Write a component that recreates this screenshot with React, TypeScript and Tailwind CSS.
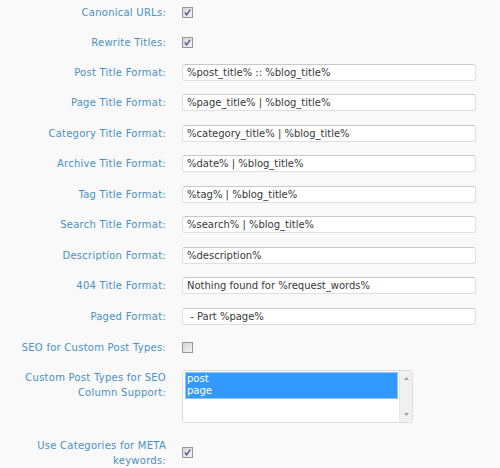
import React from "react";

const FONT = { fontFamily: '"DejaVu Sans", Verdana, sans-serif' };

function Check({ checked }: { checked: boolean }) {
  return (
    <svg width="11" height="11" viewBox="0 0 11 11" className="block">
      <defs>
        <linearGradient id="cbg" x1="0" y1="0" x2="1" y2="1">
          <stop offset="0" stopColor="#d4d4d4" />
          <stop offset="1" stopColor="#f4f4f4" />
        </linearGradient>
      </defs>
      <rect x="0.5" y="0.5" width="10" height="10" fill="url(#cbg)" stroke="#979797" />
      {checked && (
        <path d="M2.8 5.4 L4.7 7.9 L8.2 2.6" fill="none" stroke="#4a5796" strokeWidth="1.3" />
      )}
    </svg>
  );
}

function Label({ children }: { children: React.ReactNode }) {
  return (
    <div className="ml-[6px] w-[160px] shrink-0 text-right text-[10px] leading-[15px] tracking-[0.25px] text-[#4a90c2]">
      {children}
    </div>
  );
}

function CheckRow({ label, checked, h = "h-[30px]" }: { label: string; checked: boolean; h?: string }) {
  return (
    <div className={`flex items-center gap-[16px] ${h}`}>
      <Label>{label}</Label>
      <Check checked={checked} />
    </div>
  );
}

function InputRow({ label, value }: { label: string; value: string }) {
  return (
    <div className="flex h-[30.5px] items-center gap-[16px]">
      <Label>{label}</Label>
      <div className="flex h-[17px] w-[294px] items-center rounded-[3px] border border-[#dfdfdf] border-t-[#c9c9c9] bg-white pl-[4px] text-[10px] text-[#383838] whitespace-pre">
        {value}
      </div>
    </div>
  );
}

export default function App() {
  const inputs: [string, string][] = [
    ["Post Title Format:", "%post_title% :: %blog_title%"],
    ["Page Title Format:", "%page_title% | %blog_title%"],
    ["Category Title Format:", "%category_title% | %blog_title%"],
    ["Archive Title Format:", "%date% | %blog_title%"],
    ["Tag Title Format:", "%tag% | %blog_title%"],
    ["Search Title Format:", "%search% | %blog_title%"],
    ["Description Format:", "%description%"],
    ["404 Title Format:", "Nothing found for %request_words%"],
    ["Paged Format:", " - Part %page%"],
  ];
  return (
    <div className="h-[468px] w-[500px] overflow-hidden bg-[#f9f9f9]" style={FONT}>
      <div className="-mt-[3px]">
        <CheckRow label="Canonical URLs:" checked />
        <CheckRow label="Rewrite Titles:" checked />
        {inputs.map(([l, v]) => (
          <InputRow key={l} label={l} value={v} />
        ))}
        <CheckRow label="SEO for Custom Post Types:" checked={false} h="h-[31px]" />
        <div className="flex items-start gap-[16px] pt-[7px]">
          <Label>
            Custom Post Types for SEO Column Support:
          </Label>
          <div className="flex h-[53px] w-[231px] rounded-[3px] border border-[#dcdcdc] bg-white">
            <div className="flex-1 pl-[2px] pr-[1px] pt-[1px]">
              <div className="border border-[#8fc3f5] bg-[#3399ff] text-[10px] leading-[12.5px] text-white">
                <div className="pl-[1px]">post</div>
                <div className="pl-[1px]">page</div>
              </div>
            </div>
            <div className="flex w-[13px] flex-col items-center justify-between bg-[#f0f0f0] border-l border-[#e6e6e6] py-[6px] rounded-r-[3px]">
              <svg width="5" height="3" viewBox="0 0 5 3"><path d="M0 3 L2.5 0 L5 3 Z" fill="#a0a0a0" /></svg>
              <svg width="5" height="3" viewBox="0 0 5 3"><path d="M0 0 L2.5 3 L5 0 Z" fill="#a0a0a0" /></svg>
            </div>
          </div>
        </div>
        <div className="mt-[15px] flex items-center gap-[16px]">
          <Label>Use Categories for META keywords:</Label>
          <Check checked />
        </div>
      </div>
    </div>
  );
}
